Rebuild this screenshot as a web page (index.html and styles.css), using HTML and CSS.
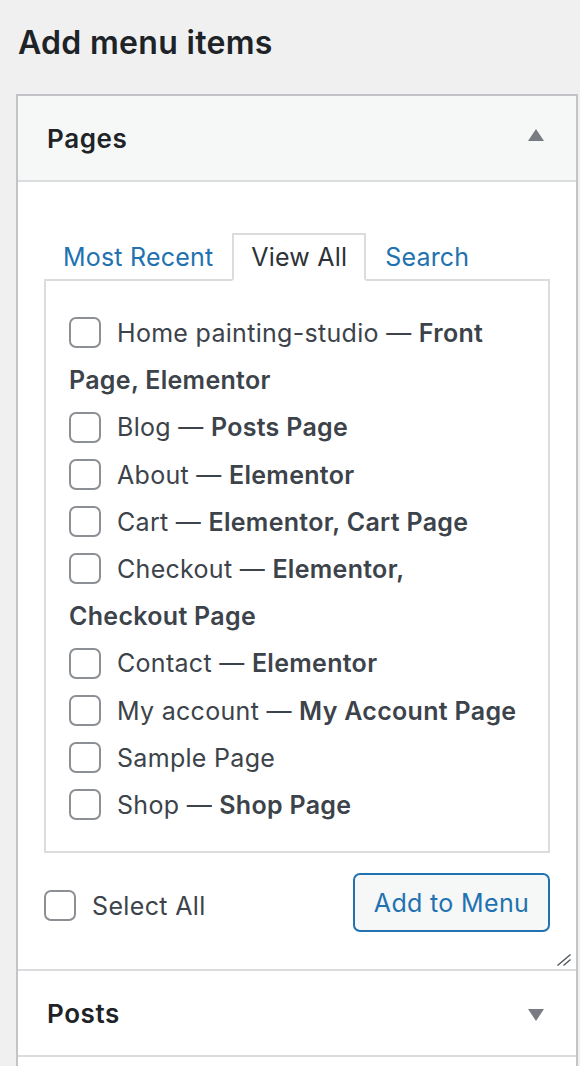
FILE: index.html
```html
<!DOCTYPE html>
<html lang="en">
<head>
<meta charset="utf-8">
<title>Add menu items</title>
<link rel="stylesheet" href="styles.css">
</head>
<body>
  <h2 class="title">Add menu items</h2>
  <div class="box">
    <div class="section">
      <div class="section-head open">
        <h3 class="section-title">Pages</h3>
        <span class="caret caret-up"></span>
      </div>
      <div class="section-body">
        <ul class="tabs">
          <li class="tab"><a class="tab-link">Most Recent</a></li>
          <li class="tab active"><a class="tab-link">View All</a></li>
          <li class="tab"><a class="tab-link">Search</a></li>
        </ul>
        <div class="panel">
          <ul class="items">
            <li class="item"><label><span class="cb"></span>Home painting-studio — <b>Front Page, Elementor</b></label></li>
            <li class="item"><label><span class="cb"></span>Blog — <b>Posts Page</b></label></li>
            <li class="item"><label><span class="cb"></span>About — <b>Elementor</b></label></li>
            <li class="item"><label><span class="cb"></span>Cart — <b>Elementor, Cart Page</b></label></li>
            <li class="item"><label><span class="cb"></span>Checkout — <b>Elementor, Checkout Page</b></label></li>
            <li class="item"><label><span class="cb"></span>Contact — <b>Elementor</b></label></li>
            <li class="item"><label><span class="cb"></span>My account — <b>My Account Page</b></label></li>
            <li class="item"><label><span class="cb"></span>Sample Page</label></li>
            <li class="item"><label><span class="cb"></span>Shop — <b>Shop Page</b></label></li>
          </ul>
        </div>
        <div class="actions">
          <label class="select-all"><span class="cb"></span>Select All</label>
          <button class="btn" type="button">Add to Menu</button>
        </div>
        <svg class="resize" width="16" height="14" viewBox="0 0 16 14" aria-hidden="true">
          <line x1="1.5" y1="12.5" x2="14.5" y2="1.5" stroke="#50575e" stroke-width="1.4"/>
          <line x1="7.5" y1="12.5" x2="14.5" y2="6.5" stroke="#50575e" stroke-width="1.4"/>
        </svg>
      </div>
    </div>
    <div class="section">
      <div class="section-head closed">
        <h3 class="section-title">Posts</h3>
        <span class="caret caret-down"></span>
      </div>
    </div>
    <div class="section">
      <div class="section-head closed"></div>
    </div>
  </div>
</body>
</html>
```

FILE: styles.css
```css
html, body {
  margin: 0;
  padding: 0;
}
body {
  background: #f0f0f1;
  font-family: Inter, "Noto Sans", "Liberation Sans", sans-serif;
  color: #3c434a;
  height: 1066px;
  overflow: hidden;
}
.title {
  margin: 0;
  padding: 23px 0 0 18px;
  font-size: 32px;
  line-height: 40px;
  font-weight: 600;
  color: #1d2327;
  letter-spacing: 0.3px;
}
.box {
  margin: 31px 2px 0 16px;
  border: 2px solid #c3c4c7;
  border-bottom: none;
  background: #fff;
}
.section-head {
  display: flex;
  align-items: center;
  justify-content: space-between;
  height: 84px;
  padding: 0 32px 0 29px;
  border-bottom: 2px solid #dcdcde;
}
.section-head.open {
  background: #f6f7f7;
}
.section-title {
  margin: 0;
  font-size: 26px;
  font-weight: 600;
  color: #1d2327;
  letter-spacing: 0.6px;
}
.caret {
  width: 0;
  height: 0;
  border-left: 8px solid transparent;
  border-right: 8px solid transparent;
}
.caret-up {
  border-bottom: 12px solid #787c82;
  margin-top: -6px;
}
.caret-down {
  border-top: 12px solid #787c82;
  margin-top: 4px;
}
.section-body {
  position: relative;
  padding: 51px 26px 37px 26px;
  border-bottom: 2px solid #dcdcde;
}
.tabs {
  display: flex;
  list-style: none;
  margin: 0 0 -2px 0;
  padding: 0;
}
.tab {
  position: relative;
  z-index: 1;
  border: 2px solid transparent;
  border-bottom: 2px solid transparent;
  padding: 0 17px;
  line-height: 44px;
  font-size: 25px;
  letter-spacing: 0.2px;
}
.tab.active {
  background: #fff;
  border-color: #dcdcde;
  border-bottom-color: #fff;
}
.tab-link {
  color: #2271b1;
  text-decoration: none;
}
.tab.active .tab-link {
  color: #2c3338;
}
.panel {
  border: 2px solid #dcdcde;
  padding: 29px 24px 22px 23px;
}
.items {
  list-style: none;
  margin: 0;
  padding: 0;
}
.item {
  font-size: 25px;
  line-height: 47.2px;
  letter-spacing: 0.3px;
  color: #3c434a;
}
.item b, .item strong {
  font-weight: 600;
}
.cb {
  display: inline-block;
  box-sizing: border-box;
  width: 32px;
  height: 31px;
  border: 2px solid #8c8f94;
  border-radius: 7px;
  background: #fff;
  vertical-align: middle;
  margin: -5px 16px 0 0;
}
.actions {
  display: flex;
  align-items: center;
  justify-content: space-between;
  padding-top: 20px;
}
.select-all {
  font-size: 25px;
  letter-spacing: 0.35px;
  color: #3c434a;
  line-height: 40px;
  margin-top: 7px;
}
.btn {
  box-sizing: border-box;
  width: 197px;
  height: 59px;
  border: 2px solid #2271b1;
  border-radius: 7px;
  background: #f6f7f7;
  color: #2271b1;
  font-family: inherit;
  font-size: 25px;
  letter-spacing: 0.35px;
  padding: 0;
}
.resize {
  position: absolute;
  right: 4px;
  bottom: 2px;
}
```
